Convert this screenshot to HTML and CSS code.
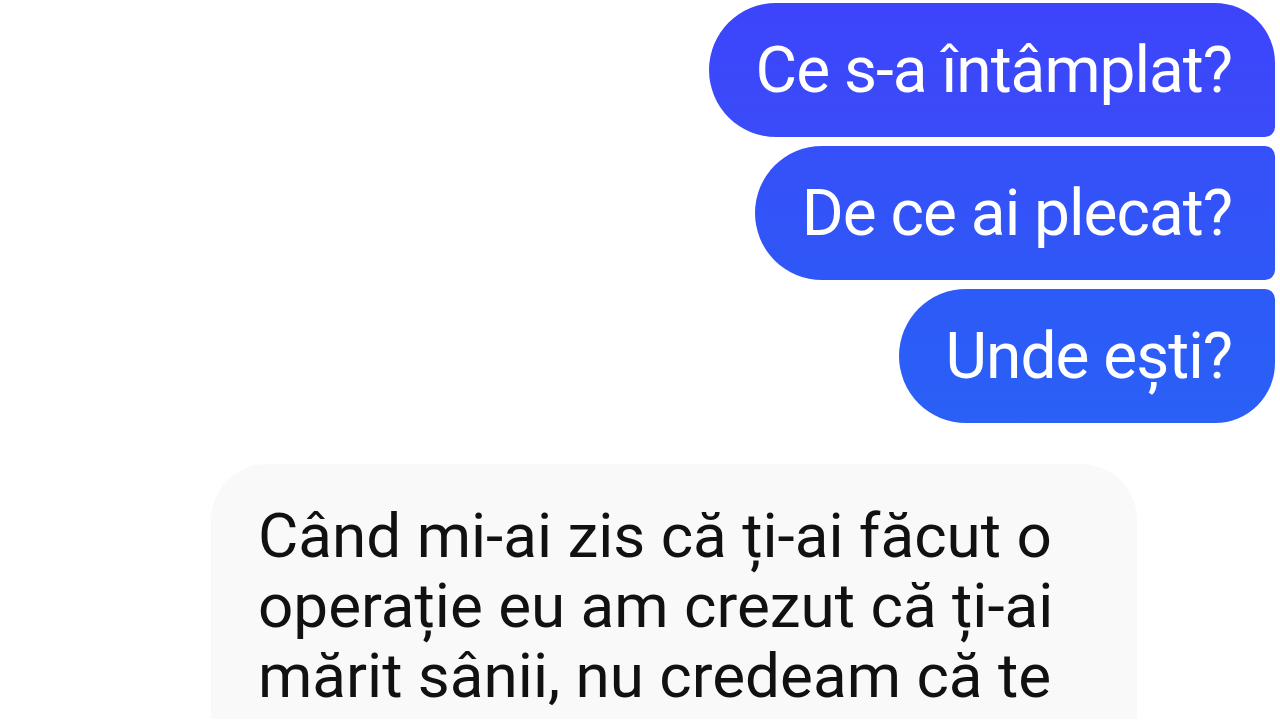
FILE: index.html
```html
<!DOCTYPE html>
<html lang="ro">
<head>
    <meta charset="UTF-8">
    <meta name="viewport" content="width=device-width, initial-scale=1.0">
    <title>Chat</title>
    <link rel="stylesheet" href="styles.css">
</head>
<body>
    <main class="chat">
        <div class="sent">
            <div class="bubble b1">Ce s-a întâmplat?</div>
            <div class="bubble b2">De ce ai plecat?</div>
            <div class="bubble b3">Unde ești?</div>
        </div>
        <div class="received">
            <p>Când mi-ai zis că ți-ai făcut o operație eu am crezut că ți-ai mărit sânii, nu credeam că te</p>
        </div>
    </main>
</body>
</html>
```

FILE: styles.css
```css
*{
    padding: 0;
    margin: 0;
    box-sizing: border-box;
}
body{
    background: #ffffff;
    font-family: Roboto, "Noto Sans", sans-serif;
    overflow: hidden;
    height: 720px;
}
.chat{
    display: flex;
    flex-direction: column;
    padding-top: 3px;
}
.sent{
    display: flex;
    flex-direction: column;
    align-items: flex-end;
    gap: 9px;
    padding-right: 5px;
}
.bubble{
    height: 134px;
    display: flex;
    align-items: center;
    padding: 0 43px 0 47px;
    color: #ffffff;
    font-size: 64px;
    letter-spacing: -1px;
    border-radius: 67px 10px 10px 67px;
}
.b1{
    background: linear-gradient(180deg, #3d44fb, #3a4cf9);
    border-radius: 67px 60px 10px 67px;
}
.b2{
    background: linear-gradient(180deg, #3650f9, #2f57f7);
}
.b3{
    background: linear-gradient(180deg, #2d5af8, #2a60f6);
    border-radius: 67px 10px 60px 67px;
}
.received{
    margin: 41px 0 0 211px;
    width: 926px;
    background: #f9f9f9;
    border-radius: 56px 56px 0 0;
    padding: 37px 40px 0 47px;
    height: 255px;
}
.received p{
    font-size: 62px;
    line-height: 70px;
    color: #111111;
    width: 840px;
}
```
